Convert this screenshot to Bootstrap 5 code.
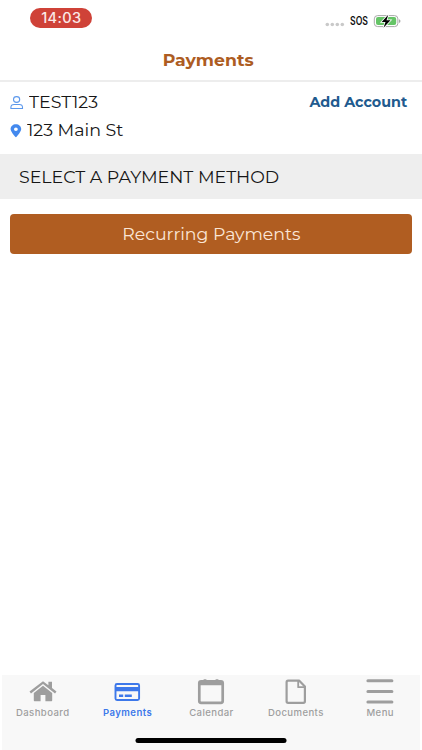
<!DOCTYPE html>
<html lang="en">
<head>
<meta charset="utf-8">
<meta name="viewport" content="width=device-width, initial-scale=1">
<title>Payments</title>
<link href="https://cdn.jsdelivr.net/npm/bootstrap@5.3.0/dist/css/bootstrap.min.css" rel="stylesheet">
<style>
body{font-family:Montserrat,Inter,"Open Sans",sans-serif;color:#161616;height:750px;overflow:hidden;line-height:1}
svg{display:block;flex:none}
.status{height:38px;padding:8px 21px 0 30px}
.clock{width:62px;height:20px;background:#cf4238;color:#fbe9e7;font-family:Inter,sans-serif;font-size:14px;font-weight:500;letter-spacing:.3px}
.clock span,.wide{display:inline-block;white-space:nowrap}
.clock span{transform:scaleX(1.04)}
.title-bar{height:44px;border-bottom:2px solid #ededed;color:#ad5c22;font-size:16px;font-weight:700;padding:3px 6px 0 0}
.title-bar .wide{transform:scaleX(1.08)}
.account{height:72px;padding:7px 15px 0 10px;font-size:16px}
.line{height:28px}
.line .wide{transform:scaleX(1.09);transform-origin:left}
.add{color:#215a8e;font-size:13.5px;font-weight:700;height:28px}
.add .wide{transform:scaleX(1.06);transform-origin:right}
.section-title{height:45px;background:#eee;padding:2px 0 0 18.6px;font-size:16px}
.section-title .wide{transform:scaleX(1.087);transform-origin:left}
.btn-pay,.btn-pay:hover{height:40px;margin:15px 10px 0 10.4px;background:#b05d21;color:#fbe6d6;border:0;border-radius:4px;font-size:16px;line-height:1;padding:2px 0 0}
.btn-pay .wide{transform:scaleX(1.083)}
.tabs{height:75px;background:#f8f8f8;border:solid #fff;border-width:0 2px}
.tab-row{margin:0 -2px}
.tab{color:#9e9e9e;font-family:Inter,sans-serif;font-size:9.2px;font-weight:500;width:20%;padding:4px 0 0 1px;letter-spacing:.4px;text-decoration:none}
.tab.active{color:#3d78ea;font-weight:600}
.tab .wide{transform:scaleX(1.04);margin-top:3px}
.home-bar{width:151px;height:5px;background:#000;margin-bottom:7px}
</style>
</head>
<body class="d-flex flex-column bg-white">
<header>
  <div class="status d-flex justify-content-between align-items-start">
    <div class="clock rounded-pill d-flex align-items-center justify-content-center"><span>14:03</span></div>
    <svg width="77" height="24" viewBox="324 8 77 24">
      <g fill="#c9c9c9"><circle cx="327.3" cy="24.5" r="1.8"/><circle cx="332.3" cy="24.5" r="1.8"/><circle cx="337.3" cy="24.5" r="1.8"/><circle cx="342.3" cy="24.5" r="1.8"/></g>
      <text x="350" y="25.4" font-family="Inter, sans-serif" font-size="11.500" font-weight="600" textLength="18" lengthAdjust="spacingAndGlyphs" fill="#111">SOS</text>
      <rect x="374.3" y="15.6" width="23.6" height="11" rx="3.3" fill="#fff" stroke="#a8a8a8"/>
      <rect x="376" y="17.1" width="20.2" height="8" rx="2" fill="#65c466"/>
      <path d="M399 19.2q1.5.3 1.5 1.9t-1.5 1.9z" fill="#a8a8a8"/>
      <path d="M388.3 14.7l-6.6 7.2h3.8l-2 5.8 7-7.5h-4z" fill="#000" stroke="#fff" stroke-width="1.6" paint-order="stroke"/>
    </svg>
  </div>
  <div class="title-bar d-flex align-items-center justify-content-center"><span class="wide">Payments</span></div>
</header>
<main class="flex-grow-1">
  <section class="account d-flex justify-content-between">
    <div>
      <div class="line d-flex align-items-center">
        <svg width="19" height="14" viewBox="0 0 19 14" fill="none" stroke="#5c98ec" stroke-width="1.1"><ellipse cx="6.6" cy="3.5" rx="3.1" ry="2.900"/><path d="M.9 12.500v-1.100c0-1.700 1.400-2.900 3.300-2.900h5c1.900 0 3.300 1.200 3.300 2.900v1.100z"/></svg>
        <span class="wide">TEST123</span>
      </div>
      <div class="line d-flex align-items-center">
        <svg width="17" height="14" viewBox="0 0 17 14"><path fill="#4389ee" fill-rule="evenodd" d="M5.900.3C2.900.3.600 2.400.600 5.100c0 2.500 3.300 6.100 4.600 7.700.4.5 1 .5 1.400 0 1.300-1.600 4.600-5.200 4.600-7.700C11.200 2.400 8.900.3 5.900.3zm0 3.200a1.900 1.700 0 1 1 0 3.400 1.900 1.700 0 0 1 0-3.400z"/></svg>
        <span class="wide">123 Main St</span>
      </div>
    </div>
    <div class="add d-flex align-items-center"><span class="wide">Add Account</span></div>
  </section>
  <div class="section-title d-flex align-items-center"><span class="wide">SELECT A PAYMENT METHOD</span></div>
  <div class="d-grid"><button type="button" class="btn btn-pay"><span class="wide">Recurring Payments</span></button></div>
</main>
<footer class="tabs position-relative">
  <nav class="tab-row d-flex">
    <a class="tab d-flex flex-column align-items-center" href="#">
      <svg width="28" height="26" viewBox="0 0 28 26" fill="#9e9e9e"><path d="M14 2.200.5 12.500l1.500 1.900L14 5.100l12 9.300 1.500-1.900L23 9.100V2.700h-3.600v3.600z"/><path d="M14 6.700 4.800 13.900v7.300c0 .6.400 1 1 1h5.800V16h4.800v6.200h5.800c.6 0 1-.4 1-1v-7.300z"/></svg>
      <span class="wide">Dashboard</span></a>
    <a class="tab active d-flex flex-column align-items-center" href="#">
      <svg width="28" height="26" viewBox="0 0 28 26"><rect x="2.500" y="5" width="23.600" height="16" rx="1.500" fill="#f8f8f8" stroke="#3d78ea" stroke-width="1.900"/><path fill="#3d78ea" d="M2.500 8h24v4.300h-24zM6 15.500h4.200v2.600H6zM11.800 15.500h7v2.600h-7z"/></svg>
      <span class="wide">Payments</span></a>
    <a class="tab d-flex flex-column align-items-center" href="#">
      <svg width="28" height="26" viewBox="0 0 28 26"><rect x="2.300" y="2.300" width="23.400" height="21.500" rx="1.800" fill="none" stroke="#9e9e9e" stroke-width="2.700"/><path fill="#9e9e9e" d="M2.300 2h23.500v4.300H2.300zM6.600.2h2.800v3H6.600zM18.600.2h2.800v3h-2.800z"/></svg>
      <span class="wide">Calendar</span></a>
    <a class="tab d-flex flex-column align-items-center" href="#">
      <svg width="28" height="26" viewBox="0 0 28 26" fill="none" stroke="#9e9e9e" stroke-width="2.200" stroke-linejoin="round"><path d="M6.100 1.700h11.200l5.600 5.800v14.800q0 1.500-1.500 1.500H6.100q-1.500 0-1.500-1.500V3.200q0-1.500 1.500-1.500z"/><path d="M16.200 2v6.200h6.400" stroke-width="1.800"/></svg>
      <span class="wide">Documents</span></a>
    <a class="tab d-flex flex-column align-items-center" href="#">
      <svg width="28" height="26" viewBox="0 0 28 26" stroke="#9e9e9e" stroke-width="3" stroke-linecap="round"><path d="M1.900 1.700h24M1.900 12.400h24M1.900 23h24"/></svg>
      <span class="wide">Menu</span></a>
  </nav>
  <div class="home-bar rounded-pill position-absolute start-50 translate-middle-x bottom-0"></div>
</footer>
<script src="https://cdn.jsdelivr.net/npm/bootstrap@5.3.0/dist/js/bootstrap.bundle.min.js"></script>
</body>
</html>
